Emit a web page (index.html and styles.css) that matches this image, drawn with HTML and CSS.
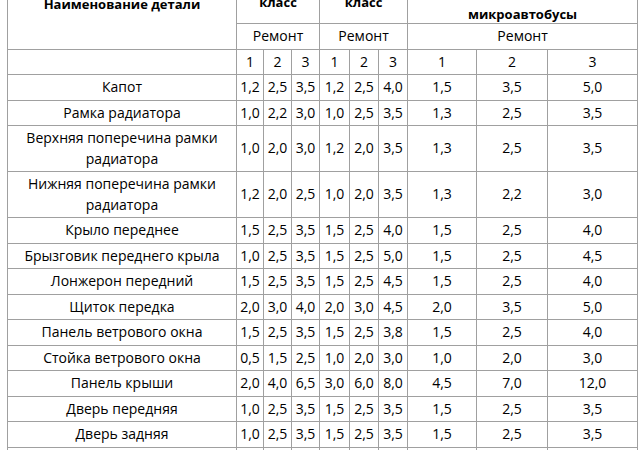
FILE: index.html
```html
<!DOCTYPE html>
<html lang="ru">
<head>
<meta charset="utf-8">
<title>Нормы трудоемкости</title>
<link rel="stylesheet" href="styles.css">
</head>
<body>
<table class="norms">
  <colgroup>
    <col class="c-name">
    <col class="c-a1"><col class="c-a2"><col class="c-a3">
    <col class="c-b1"><col class="c-b2"><col class="c-b3">
    <col class="c-m1"><col class="c-m2"><col class="c-m3">
  </colgroup>
  <thead>
    <tr class="h-top">
      <th rowspan="2" class="h-name">Наименование детали</th>
      <th colspan="3" class="h-group">Легковые<br>класс</th>
      <th colspan="3" class="h-group">Средний<br>класс</th>
      <th colspan="3" class="h-group h-micro">
        <p class="h-par">Грузовые автомобили, автобусы и</p>
        <p class="h-par">микроавтобусы</p>
      </th>
    </tr>
    <tr>
      <td colspan="3">Ремонт</td>
      <td colspan="3">Ремонт</td>
      <td colspan="3">Ремонт</td>
    </tr>
    <tr>
      <td></td>
      <td>1</td><td>2</td><td>3</td>
      <td>1</td><td>2</td><td>3</td>
      <td>1</td><td>2</td><td>3</td>
    </tr>
  </thead>
  <tbody>
    <tr><td>Капот</td><td>1,2</td><td>2,5</td><td>3,5</td><td>1,2</td><td>2,5</td><td>4,0</td><td>1,5</td><td>3,5</td><td>5,0</td></tr>
    <tr><td>Рамка радиатора</td><td>1,0</td><td>2,2</td><td>3,0</td><td>1,0</td><td>2,5</td><td>3,5</td><td>1,3</td><td>2,5</td><td>3,5</td></tr>
    <tr><td>Верхняя поперечина рамки радиатора</td><td>1,0</td><td>2,0</td><td>3,0</td><td>1,2</td><td>2,0</td><td>3,5</td><td>1,3</td><td>2,5</td><td>3,5</td></tr>
    <tr><td>Нижняя поперечина рамки радиатора</td><td>1,2</td><td>2,0</td><td>2,5</td><td>1,0</td><td>2,0</td><td>3,5</td><td>1,3</td><td>2,2</td><td>3,0</td></tr>
    <tr><td>Крыло переднее</td><td>1,5</td><td>2,5</td><td>3,5</td><td>1,5</td><td>2,5</td><td>4,0</td><td>1,5</td><td>2,5</td><td>4,0</td></tr>
    <tr><td>Брызговик переднего крыла</td><td>1,0</td><td>2,5</td><td>3,5</td><td>1,5</td><td>2,5</td><td>5,0</td><td>1,5</td><td>2,5</td><td>4,5</td></tr>
    <tr><td>Лонжерон передний</td><td>1,5</td><td>2,5</td><td>3,5</td><td>1,5</td><td>2,5</td><td>4,5</td><td>1,5</td><td>2,5</td><td>4,0</td></tr>
    <tr><td>Щиток передка</td><td>2,0</td><td>3,0</td><td>4,0</td><td>2,0</td><td>3,0</td><td>4,5</td><td>2,0</td><td>3,5</td><td>5,0</td></tr>
    <tr><td>Панель ветрового окна</td><td>1,5</td><td>2,5</td><td>3,5</td><td>1,5</td><td>2,5</td><td>3,8</td><td>1,5</td><td>2,5</td><td>4,0</td></tr>
    <tr><td>Стойка ветрового окна</td><td>0,5</td><td>1,5</td><td>2,5</td><td>1,0</td><td>2,0</td><td>3,0</td><td>1,0</td><td>2,0</td><td>3,0</td></tr>
    <tr><td>Панель крыши</td><td>2,0</td><td>4,0</td><td>6,5</td><td>3,0</td><td>6,0</td><td>8,0</td><td>4,5</td><td>7,0</td><td>12,0</td></tr>
    <tr><td>Дверь передняя</td><td>1,0</td><td>2,5</td><td>3,5</td><td>1,5</td><td>2,5</td><td>3,5</td><td>1,5</td><td>2,5</td><td>3,5</td></tr>
    <tr><td>Дверь задняя</td><td>1,0</td><td>2,5</td><td>3,5</td><td>1,5</td><td>2,5</td><td>3,5</td><td>1,5</td><td>2,5</td><td>3,5</td></tr>
    <tr><td>Крышка багажника</td><td>1,0</td><td>2,0</td><td>3,0</td><td>1,0</td><td>2,0</td><td>3,0</td><td>1,5</td><td>2,5</td><td>3,5</td></tr>
    <tr><td>Панель задка</td><td>1,5</td><td>2,5</td><td>3,5</td><td>1,5</td><td>2,5</td><td>4,0</td><td>2,0</td><td>3,0</td><td>4,5</td></tr>
  </tbody>
</table>
</body>
</html>
```

FILE: styles.css
```css
html, body {
  margin: 0;
  padding: 0;
  background: #ffffff;
}

body {
  padding-left: 7px;
  font-family: "Open Sans", "Liberation Sans", sans-serif;
  font-size: 14px;
  color: #000000;
}

.norms {
  margin-top: -41px;
  width: 631px;
  table-layout: fixed;
  border-collapse: collapse;
}

.norms td,
.norms th {
  border: 1px solid #a0a0a0;
  padding: 2px 1px;
  line-height: 20.5px;
  text-align: center;
  vertical-align: middle;
  white-space: normal;
}

.norms th {
  font-size: 13px;
  font-weight: 700;
}

.h-top {
  height: 64px;
}

.h-top th {
  padding-top: 1px;
  padding-bottom: 1px;
}

.h-top .h-micro {
  vertical-align: bottom;
  padding-bottom: 0;
}

.h-par {
  margin: 0;
  line-height: 18px;
}

.h-par + .h-par {
  margin-top: 6px;
}

.c-name { width: 229px; }
.c-a1 { width: 27px; }
.c-a2 { width: 28px; }
.c-a3 { width: 28px; }
.c-b1 { width: 30px; }
.c-b2 { width: 29px; }
.c-b3 { width: 29px; }
.c-m1 { width: 69px; }
.c-m2 { width: 71px; }
.c-m3 { width: 90px; }
```
